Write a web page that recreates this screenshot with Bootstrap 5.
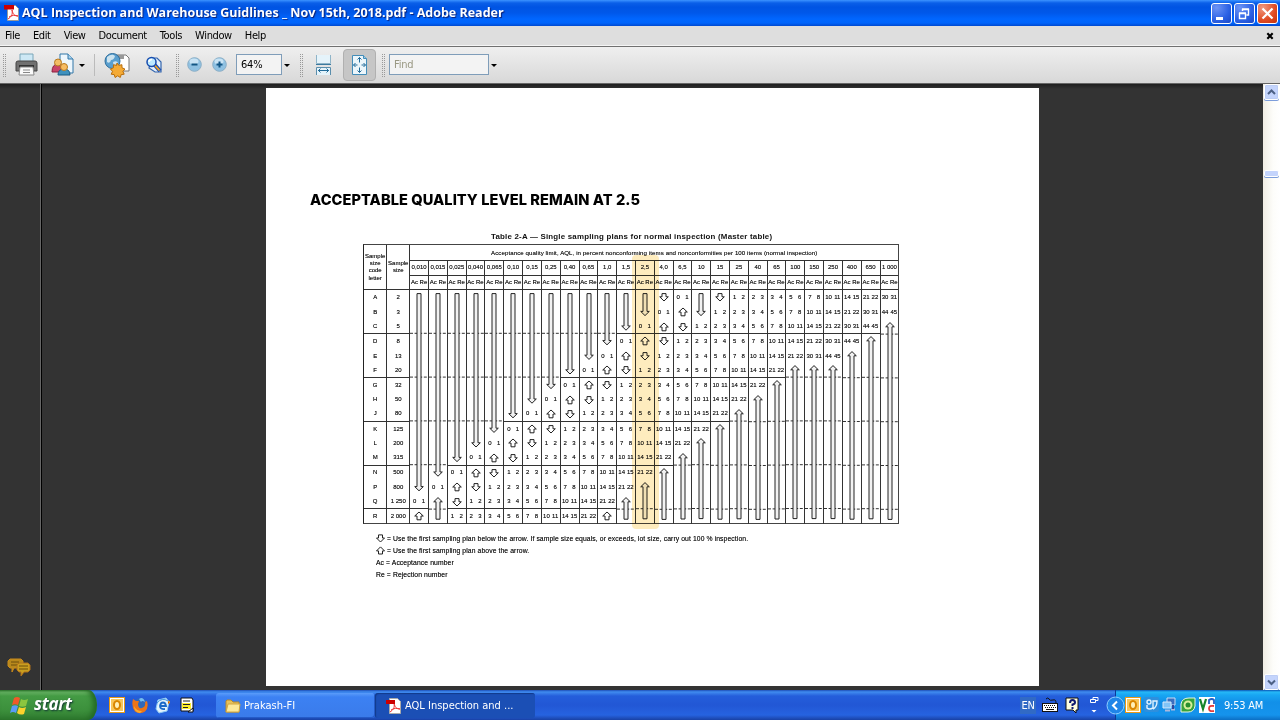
<!DOCTYPE html>
<html lang="en">
<head>
<meta charset="utf-8">
<title>AQL Inspection and Warehouse Guidlines - Adobe Reader</title>
<link href="https://cdn.jsdelivr.net/npm/bootstrap@5.3.0/dist/css/bootstrap.min.css" rel="stylesheet">
<style>
html,body{height:100%;overflow:hidden}
body{font-family:"DejaVu Sans Condensed","DejaVu Sans",sans-serif;font-stretch:condensed;font-size:11px;line-height:1;color:#000;background:#333;letter-spacing:-.22px}
svg{display:block;flex:none}
.app{width:1280px;height:720px}
/* title bar */
.titlebar{height:26px;padding:0 2px 0 4px;background:linear-gradient(#3d95ff 0,#2a80f8 1px,#0a5fe8 3px,#0054e3 7px,#0058ea 13px,#0066ff 19px,#0064fb 23px,#0049d0 26px)}
.titletext{font-family:"Open Sans",sans-serif;font-stretch:normal;font-weight:700;font-size:12.5px;color:#fff;text-shadow:1px 1px 1px #0a1f73;letter-spacing:0;white-space:nowrap;margin-left:2px}
.winbtns{gap:2px}
.winbtn{width:21px;height:21px;border:1px solid #fff;border-radius:3px;background:radial-gradient(circle at 25% 20%,#6d94f5,#2b61e4 60%,#1c47c5)}
.winclose{background:radial-gradient(circle at 25% 20%,#f09a80,#e04b22 60%,#c2320c)}
/* menu */
.menubar{height:20px;background:#dedede;padding:0 6px 0 5px;border-bottom:1px solid #f5f5f5}
.menubar .nav{gap:13px}
.menubar .nav-link{padding:0;color:#000;white-space:nowrap;letter-spacing:-.38px}
.toolstrip{height:38px;border-top:1px solid #707070;border-bottom:1px solid #666;background:linear-gradient(#efefef,#d8d8d8)}
.toolstrip>*{flex:none}
.grip{width:3px;height:23px;background:conic-gradient(#999 25%,transparent 0) -1px 0/2px 2px}
.m2{margin-left:2px}.m3{margin-left:3px}.m4{margin-left:4px}.m6{margin-left:6px}.m8{margin-left:8px}.m9{margin-left:9px}.m10{margin-left:10px}.m12{margin-left:12px}.m13{margin-left:13px}.m16{margin-left:16px}.m21{margin-left:21px}
.caret{width:0;height:0;border:3px solid transparent;border-top-color:#000;border-bottom:0}
.vsep{width:1px;height:22px;background:#bbb}
.field{height:21px;border:1px solid #7f9db9;background:#f3f3f3;padding:0 4px;line-height:20px;margin-bottom:1px}
.zoomfield{width:46px}.findfield{width:100px;color:#9a9883}
.pressed{width:33px;height:32px;border:1px solid #b0b0b0;border-radius:4px;background:#c6c6c6;padding-left:7px}
/* document area */
.workspace{height:606px;background:linear-gradient(#1f1f1f,#333 5px)}
.sidepane{width:42px;border-right:1px solid #000;box-shadow:inset -1px 0 #666;padding:0 0 12px 7px}
.canvas{padding:4px 224px 4px 224px}
.sheet{width:773px;height:598px;background:#fff;color:#111;font-family:"Liberation Sans",sans-serif;font-stretch:normal}
.heading{font-family:Inter,sans-serif;font-weight:800;font-size:14.6px;line-height:18px;margin:0;padding:103px 0 0 44px;white-space:nowrap;color:#000;letter-spacing:.06px}
.caption-line{font-weight:700;font-size:7.9px;line-height:10px;padding:23px 0 0 225px;white-space:nowrap;letter-spacing:.21px}
.plan{margin:2.4px 0 0 97px;width:536.2px;height:279.3px;display:grid;position:relative;
 grid-template-columns:22.4px 22.8px repeat(26,18.82px);
 grid-template-rows:15.8px 14.5px 14.8px repeat(16,14.6px);border:1px solid #444;border-left-color:#222;
 font-size:6px;line-height:7.2px;text-shadow:0 0 .6px #555;color:#222;letter-spacing:0}
.plan>div{border-left:.8px solid #333;white-space:nowrap}
.plan>div.edge{border-left:0}
.plan .ruled{border-bottom:1px solid #333}
.plan .wide{font-size:6.1px;letter-spacing:.09px}
.pair span{width:8.7px;text-align:center}
.aql-mark{position:absolute;left:268px;top:10px;width:27px;height:274px;border-radius:4px;background:#feecbe;mix-blend-mode:multiply}
.plan>.aql-mark{border:0}
.legend{font-size:6.8px;line-height:12.1px;margin:9.5px 0 0 110px;text-shadow:0 0 .6px #555;color:#222;letter-spacing:.09px}
.legend div{white-space:nowrap;height:12.1px}
.legend svg{margin-left:-1px;margin-right:1px}
/* scroll bar */
.scroller{width:17px;background:linear-gradient(90deg,#f0ede4,#fdfdfa 60%,#fff);padding:0 1px}
.sbtn{width:15px;height:16px;border-radius:2px;border:1px solid #fff;box-shadow:0 1px #7c9ddb,inset 0 0 0 1px #bccdf5;background:#c4d4fc}
.thumb{width:15px;height:7px;margin-top:70px;border-radius:2px;border:1px solid #fff;box-shadow:0 1px #7c9ddb;background:#c4d4fc}
/* task bar */
.taskbar{height:30px;color:#fff;background:linear-gradient(#1f4fb8 0,#3f8cf0 2px,#3a80ea 3px,#245edb 6px,#2257d5 15px,#2663e0 25px,#1941a5 30px)}
.taskbar>*{flex:none}
.startbtn{width:97px;height:30px;border-radius:0 9px 9px 0/0 15px 15px 0;padding-left:10px;gap:5px;background:linear-gradient(#2f7a30 0,#6cb868 2px,#449b44 6px,#3c903c 20px,#2f7a2f 30px);box-shadow:inset -4px 0 5px #246b25}
.startword{font-family:"Open Sans",sans-serif;font-stretch:normal;font-weight:700;font-style:italic;font-size:17px;line-height:26px;letter-spacing:-.3px;padding-bottom:2px;text-shadow:1px 1px 2px #133}
.taskbtn{width:159px;height:25px;margin-top:1px;border-radius:3px;padding-left:9px;gap:3px;background:linear-gradient(#5a9cfa,#3c81f3 4px,#3a7bea);box-shadow:inset -1px -1px #245bc8;letter-spacing:0}
.taskbtn.current{width:160px;padding-left:11px;gap:4px;background:#1b4fb5;box-shadow:inset 1px 1px 1px #123a8a}
.lang{width:16px;height:17px;background:#316ac5;line-height:18px;text-align:center}
.tray{width:165px;height:30px;border-left:1px solid #0c3a96;background:linear-gradient(#0b56b8 0,#26b8f7 2px,#18a6f3 5px,#1290e8 12px,#1593ec 25px,#0c6fc4 30px)}
.chev{margin-left:-10px}
</style>
</head>
<body>
<div class="app d-flex flex-column">
 <header class="titlebar d-flex align-items-center">
  <svg width="16" height="18" viewBox="0 0 16 18"><path d="M3.500 1.500h8l3 3v12h-11z" fill="#fff" stroke="#999"/><path d="M8 6c1 4 2 6 6 6M4 15c3-2 5-4 4-9M5 13c3-2 6-2 9-1" stroke="#e33" fill="none"/><rect y="1" width="10" height="4.500" fill="#c00"/></svg>
  <span class="titletext">AQL Inspection and Warehouse Guidlines _ Nov 15th, 2018.pdf - Adobe Reader</span>
  <div class="winbtns ms-auto d-flex">
   <div class="winbtn"><svg width="19" height="19"><path d="M4 14.500h7" stroke="#fff" stroke-width="3"/></svg></div>
   <div class="winbtn"><svg width="19" height="19" fill="none" stroke="#fff"><path d="M4.500 9.500h6v5h-6zM4 9h7M7.500 7V5.500h6v5.500h-2M7 5h7" stroke-width="1.400"/></svg></div>
   <div class="winbtn winclose"><svg width="19" height="19"><path d="M4.500 4.500l10 10m0-10l-10 10" stroke="#fff" stroke-width="2.200"/></svg></div>
  </div>
 </header>
 <nav class="menubar d-flex align-items-center">
  <div class="nav d-flex flex-nowrap">
   <a class="nav-link">File</a><a class="nav-link">Edit</a><a class="nav-link">View</a><a class="nav-link">Document</a><a class="nav-link">Tools</a><a class="nav-link">Window</a><a class="nav-link">Help</a>
  </div>
  <svg class="ms-auto" width="8" height="8" viewBox="0 0 9 9"><path d="M1.500 1.500l6 6m0-6l-6 6" stroke="#000" stroke-width="2.400"/></svg>
 </nav>
 <div class="toolstrip d-flex align-items-center">
  <i class="grip m3"></i>
  <svg class="m9" width="24" height="24" viewBox="0 0 24 24"><path d="M5 1h13v8H5z" fill="#cde8f5" stroke="#7ba6b8"/><path d="M1 10q0-2 2-2h17q2 0 2 2v8H1z" fill="#707070" stroke="#444"/><path d="M4 12h15v3H4z" fill="#333"/><path d="M5 14h13l1 8H4z" fill="#fafafa" stroke="#888"/><path d="M8 17h7M8 19.500h7" stroke="#888"/></svg>
  <svg class="m12" width="24" height="24" viewBox="0 0 24 24"><path d="M9 1h8l5 5v14H9z" fill="#edf6fc" stroke="#3177a8"/><path d="M17 1v5h5" fill="#a8d0eb" stroke="#3177a8"/><path d="M1 19q0-8 6-8t6 8z" fill="#c84468" stroke="#8c2040"/><circle cx="7" cy="9.500" r="3.500" fill="#f3bd65" stroke="#b67920"/><path d="M7 22q0-6 6-6t6 6z" fill="#3f91bd" stroke="#185b83"/><circle cx="13" cy="14" r="3.500" fill="#f7bd62" stroke="#b67920"/></svg>
  <i class="caret m4"></i><i class="vsep m9"></i>
  <svg class="m9" width="28" height="26" viewBox="0 0 28 26"><path d="M11 3h11l3 3v13H11z" fill="#fff" stroke="#777"/><path d="M11 3h9v4h-9z" fill="#999"/><circle cx="8.500" cy="9" r="7.500" fill="#5a9fce" stroke="#2c6d9c"/><path d="M3 5q5-4 8-1-1 4-4 4-1 4-4 2zM9 10q4-2 5 1l-4 4z" fill="#cde3ee"/><path d="M13 11l1.900 2.400 3-.7.100 3.100 2.900 1.200-2 2.400 1.300 2.800-3 .4-.9 2.900-2.600-1.700-2.600 1.700-.9-2.900-3-.4 1.300-2.800-2-2.400 2.900-1.200.100-3.100 3 .7z" fill="#f4aa35" stroke="#b86d0a"/></svg>
  <svg class="m13" width="18" height="20" viewBox="0 0 18 20"><path d="M7 3h5l4 4v10h-6L4 13z" fill="#e4f0fb" stroke="#3465ad" stroke-width="1.200"/><path d="M9 9l6 7" stroke="#1b4eb0" stroke-width="4"/><path d="M9.500 10l5 5.500" stroke="#f6a51c" stroke-width="1.800"/><circle cx="6.500" cy="7" r="4.500" fill="#bdeaff" stroke="#174cae" stroke-width="1.500"/><path d="M4 7q0-2.500 3-2.500" fill="none" stroke="#fff" stroke-width="1.500"/></svg>
  <i class="grip m13"></i>
  <svg class="m8" width="16" height="16" viewBox="0 0 16 16"><circle cx="7.500" cy="7.500" r="6.800" fill="#8fc1e2" stroke="#8aaec6"/><ellipse cx="7" cy="4.500" rx="4.500" ry="3" fill="#c8e3f4"/><path d="M4.500 7.500h6" stroke="#125685" stroke-width="2"/></svg>
  <svg class="m9" width="16" height="16" viewBox="0 0 16 16"><circle cx="7.500" cy="7.500" r="6.800" fill="#8fc1e2" stroke="#8aaec6"/><ellipse cx="7" cy="4.500" rx="4.500" ry="3" fill="#c8e3f4"/><path d="M4.500 7.500h6M7.500 4.500v6" stroke="#125685" stroke-width="2"/></svg>
  <div class="field zoomfield m8">64%</div><i class="caret m2"></i><i class="grip m10"></i>
  <svg class="m12" width="18" height="20" viewBox="0 0 18 20"><path d="M1.500 0v8.500h14V0" fill="#e5f3fa" stroke="#8fb4c8"/><path d="M1 9.500h15" stroke="#3b799e"/><path d="M1.500 20v-7.500h14V20" fill="#e5f3fa" stroke="#5a8eac"/><path d="M3 15.500h11M5.500 13.500l-2 2 2 2M11.500 13.500l2 2-2 2" fill="none" stroke="#216b99"/></svg>
  <div class="pressed m10 d-flex align-items-center"><svg width="18" height="21" viewBox="0 0 18 21"><path d="M1.500.5h11l3 3v16h-14z" fill="#ecf6fb" stroke="#438db9"/><path d="M12.500.5v3h3" fill="#9ccbe3" stroke="#438db9"/><path d="M8.500 2.500v5M6.500 4.500l2-2 2 2M8.500 12.500v5M6.500 15.500l2 2 2-2M2.500 10h4M4.500 8l-2 2 2 2M10.500 10h4M12.500 8l2 2-2 2" fill="none" stroke="#216b99"/></svg></div>
  <i class="grip m6"></i><div class="field findfield m4">Find</div><i class="caret m2"></i>
 </div>
 <main class="workspace d-flex">
  <aside class="sidepane d-flex align-items-end"><svg width="25" height="20" viewBox="0 0 25 20"><path d="M3 1h11l2 2v5l-2 2H7l-2 4V10H3L1 8V3z" fill="#b8891c" stroke="#c98a1a"/><path d="M4 4h8M4 7h6" stroke="#6d4e0c"/><path d="M12 5h9l2 2v5l-2 2h-4l-3 4v-4h-2l-2-2V7z" fill="#c99e1f" stroke="#b0701a"/><path d="M12 8h9M12 11h9" stroke="#6d4e0c"/></svg></aside>
  <section class="canvas flex-grow-1">
   <article class="sheet">
    <h1 class="heading">ACCEPTABLE QUALITY LEVEL REMAIN AT 2.5</h1>
    <div class="caption-line">Table 2-A — Single sampling plans for normal inspection (Master table)</div>
    <div class="plan" id="plan"></div>
    <div class="legend">
     <div class="d-flex"><svg width="11" height="11" viewBox="-5.500 -1.500 11 11"><path d="M-2 .4H2V3.500H4L0 7.500L-4 3.500H-2Z" fill="#fff" stroke="#222"/></svg><span>= Use the first sampling plan below the arrow. If sample size equals, or exceeds, lot size, carry out 100 % inspection.</span></div>
     <div class="d-flex"><svg width="11" height="11" viewBox="-5.500 -1.500 11 11"><path d="M0 .4L4 4.400H2V7.500H-2V4.400H-4Z" fill="#fff" stroke="#222"/></svg><span>= Use the first sampling plan above the arrow.</span></div>
     <div>Ac = Acceptance number</div>
     <div>Re = Rejection number</div>
    </div>
   </article>
  </section>
  <div class="scroller d-flex flex-column">
   <div class="sbtn"><svg width="13" height="14"><path d="M3 9l3.500-3.500L10 9" fill="none" stroke="#4d6185" stroke-width="2"/></svg></div>
   <div class="thumb"></div>
   <div class="sbtn mt-auto"><svg width="13" height="14"><path d="M3 5.500L6.500 9 10 5.500" fill="none" stroke="#4d6185" stroke-width="2"/></svg></div>
  </div>
 </main>
 <footer class="taskbar d-flex align-items-center">
  <div class="startbtn d-flex align-items-center"><svg width="19" height="19" viewBox="0 0 19 19"><path d="M4 2q3-2 6 0L8 9Q5 7.500 2 9z" fill="#f0592a"/><path d="M11 3q3 2 7 0l-2 7q-4 1.500-7 0z" fill="#8cc63f"/><path d="M2 10q3-1.500 6 0l-2 7q-3-2-6 0z" fill="#5a9cf8"/><path d="M9 11q3 2 7 0l-2 7q-4 1.500-7-1z" fill="#fbd22c"/></svg><span class="startword">start</span></div>
  <svg class="m12" width="17" height="17" viewBox="0 0 17 17"><rect x=".5" y=".5" width="15" height="15" fill="#fff" stroke="#e89a16"/><rect x="2" y="2" width="12" height="12" fill="#f8c65a"/><ellipse cx="8" cy="8" rx="3" ry="4" fill="#fff0b8" stroke="#d98600" stroke-width="2"/></svg>
  <svg class="m6" width="17" height="17" viewBox="0 0 17 17"><circle cx="8.500" cy="8" r="7" fill="#2f68bb"/><path d="M7 2q4-3 6 3-3-2-4 0z" fill="#74bdf0"/><path d="M1 2l3 2h3l-1 3q0 5 4 4 4-1 3-6l2-1q2 7-2 10.500-5 3.500-10 0Q-1 10 1 2z" fill="#ec7418"/><path d="M2 9q2 5 8 5l-2 2Q2 15 2 9z" fill="#f9ac30"/></svg>
  <svg class="m6" width="17" height="17" viewBox="0 0 17 17"><path d="M3 3l8-2 3 4-2 9-8 2-3-4z" fill="#e2f2fc" stroke="#8cc8f4"/><path d="M5 9h6Q10.500 5.500 8 5.500T5 9q0 3.500 5 3" fill="none" stroke="#1a69c8" stroke-width="1.800"/><path d="M2 6q5-6 11-2" fill="none" stroke="#4197df"/><path d="M13 4l2 1-2 2" stroke="#e0a21c" fill="#d5401a"/></svg>
  <svg class="m8" width="15" height="17" viewBox="0 0 15 17"><path d="M1 1h11l1 2v11H1z" fill="#fff" stroke="#111"/><path d="M2 6h9v6H2z" fill="#ffef28"/><path d="M3 4h7M3 7.500h7M3 10.500h5" stroke="#222" stroke-width="1.200"/><path d="M8 15l5-4v4z" fill="#fff" stroke="#111"/></svg>
  <div class="taskbtn m21 d-flex align-items-center"><svg width="16" height="14" viewBox="0 0 16 14"><path d="M1 13V2l1-1h4l2 2h6v10z" fill="#e6c15a" stroke="#b5892c"/><path d="M1 13l2-8h12l-1 8z" fill="#fce99a" stroke="#d0a640"/></svg><span>Prakash-FI</span></div>
  <div class="taskbtn current d-flex align-items-center"><svg width="15" height="16" viewBox="0 0 15 16"><path d="M3.500.5h8l3 3v12h-11z" fill="#fff" stroke="#aaa"/><path d="M8 5c1 4 2 6 6 6M4 14c3-2 5-4 4-9M5 12c3-2 6-2 9-1" stroke="#e33" fill="none"/><rect y="2" width="9" height="4" fill="#c00"/></svg><span>AQL Inspection and ...</span></div>
  <div class="lang ms-auto">EN</div>
  <svg class="m6" width="17" height="16" viewBox="0 0 17 16"><path d="M4 2q2-2 3 0t4 1 3 3" fill="none" stroke="#111"/><rect x=".5" y="6.500" width="15" height="8" fill="#fff" stroke="#111"/><path d="M2 8.500h12M3 10.500h11" stroke="#111" stroke-dasharray="1 1"/><path d="M4 12.500h8" stroke="#111"/></svg>
  <svg class="m6" width="15" height="17" viewBox="0 0 15 17"><path d="M1 1h12v12h-2v3l-3-3H1z" fill="#fffee0" stroke="#111"/><path d="M5 6q0-3 2.500-3T10 5.500Q10 7 7.500 7.500V9M7.500 10v2" fill="none" stroke="#111b70" stroke-width="2"/></svg>
  <svg class="m10" width="9" height="18" viewBox="0 0 9 18"><path d="M3 3V1.500h5v3H6M.5 3.500h5v3h-5z" fill="none" stroke="#fff"/><path d="M1.500 14h5L4 16.500z" fill="#fff"/></svg>
  <div class="tray m16 d-flex align-items-center">
   <svg class="chev" width="19" height="19" viewBox="0 0 19 19"><circle cx="9.500" cy="9.500" r="8.500" fill="#1f85e8" stroke="#8fd0ff"/><path d="M11 5.500l-4 4 4 4" fill="none" stroke="#fff" stroke-width="2"/></svg>
   <svg width="16" height="16" viewBox="0 0 16 16"><rect x=".5" y=".5" width="15" height="15" fill="#fff" stroke="#e89a16"/><rect x="2" y="2" width="12" height="12" fill="#f8c65a"/><ellipse cx="8" cy="8" rx="3" ry="4" fill="#fff0b8" stroke="#d98600" stroke-width="2"/></svg>
   <svg class="m3" width="16" height="16" viewBox="0 0 16 16"><rect width="15" height="15" rx="2" fill="#2e8fdd"/><circle cx="5" cy="5" r="2" fill="none" stroke="#def1ff" stroke-width="1.400"/><path d="M3 8v3q2 2 6 0V4h4q0 6-4 8" fill="none" stroke="#def1ff" stroke-width="1.400"/></svg>
   <svg class="m2" width="16" height="16" viewBox="0 0 16 16"><path d="M5 1h8v7H5z" fill="#3a6fc0" stroke="#c9dcf5"/><path d="M1 5h8v6H1z" fill="#81c4f7" stroke="#d7e9fb"/><path d="M3 13.500h5M9 12.500h4" stroke="#aab8dd" stroke-width="2"/><path d="M11 8v4" stroke="#33479b" stroke-width="2"/></svg>
   <svg class="m2" width="17" height="17" viewBox="0 0 17 17"><path d="M1 15V7q1-6 8-6h6v8q-1 6-7 6z" fill="#38a33c" stroke="#e7f7df"/><circle cx="8" cy="8" r="4.500" fill="#d9ef9b"/><circle cx="8" cy="8" r="2.500" fill="#288f2d"/></svg>
   <svg class="m2" width="16" height="16" viewBox="0 0 16 16"><path d="M0 0h16v16H0z" fill="#fff"/><path d="M1 2l3 10 3-10" fill="none" stroke="#16862c" stroke-width="2.200"/><path d="M10 7V3q3-2 5 0v4" fill="none" stroke="#245fc4" stroke-width="1.800"/><path d="M15 9q-5-1-5 2.500t5 2.500" fill="none" stroke="#e23b3b" stroke-width="1.800"/></svg>
   <span class="m9">9:53 AM</span>
  </div>
 </footer>
</div>
<script>
// Sampling plan: each AQL column repeats the same sequence, shifted by one row.
const aql=['0,010','0,015','0,025','0,040','0,065','0,10','0,15','0,25','0,40','0,65','1,0','1,5','2,5','4,0','6,5','10','15','25','40','65','100','150','250','400','650','1 000'];
const letters='ABCDEFGHJKLMNPQR';
const sizes=['2','3','5','8','13','20','32','50','80','125','200','315','500','800','1 250','2 000'];
const seq=['0 1','up','down','1 2','2 3','3 4','5 6','7 8','10 11','14 15','21 22','30 31','44 45'];
const W=18.82,H=14.6,ruled=[2,5,8,11,14];
const plan=document.getElementById('plan');
let out='';
function cell(row,col,span,cspan,cls,html){
 out+=`<div class="${cls}" style="grid-area:${row}/${col}/span ${span}/span ${cspan}">${html}</div>`;
}
function arrow(dir,r,n){
 const m=W/2-.4,h=n*H;let s='';
 for(const k of ruled) if(k>=r&&k<r+n-1){const y=(k-r+1)*H-.5;s+=`<path d="M0 ${y}H${W}" stroke="#333" stroke-dasharray="3 1.600"/>`;}
 const a=3.6,b=h-H+11,c=n>1&&dir=='up'?h-5:h-3.8,w=2;
 const d=dir=='down'?`M${m-w} ${a}H${m+w}V${b-4.2}H${m+4.3}L${m} ${b}L${m-4.3} ${b-4.2}H${m-w}Z`
  :`M${m} ${n>1?2.6:3}L${m+4.3} ${n>1?6.8:7}H${m+w}V${c}H${m-w}V${n>1?6.8:7}H${m-4.3}Z`;
 return `<svg width="${W-.8}" height="${h}">${s}<path d="${d}" fill="${n>1?'#f2f2f2':'#fff'}" stroke="#222"/></svg>`;
}
const mid='d-flex align-items-center justify-content-center text-center ';
cell(1,1,3,1,mid+'edge ruled','Sample<br>size<br>code<br>letter');
cell(1,2,3,1,mid+'ruled','Sample<br>size');
cell(1,3,1,26,mid+'ruled wide','Acceptance quality limit, AQL, in percent nonconforming items and nonconformities per 100 items (normal inspection)');
aql.forEach((t,c)=>{cell(2,c+3,1,1,mid+'ruled',t);cell(3,c+3,1,1,mid+'ruled','Ac Re');});
for(let r=0;r<16;r++){
 const u=ruled.includes(r)?'ruled':'';
 cell(r+4,1,1,1,mid+'edge '+u,letters[r]);
 cell(r+4,2,1,1,mid+u,sizes[r]);
}
aql.forEach((t,c)=>{
 const zero=14-c;
 const rows=[];
 for(let r=0;r<16;r++){
  const k=r-zero;
  let v=k<0?'down':k<=10?seq[k]:(k<=12&&r<=4?seq[k]:'up');
  if(c==15&&r==0)v='down';
  if(c==1&&r==15)v='up';
  rows.push(v);
 }
 for(let r=0;r<16;){
  let n=1;
  if(rows[r]=='up'||rows[r]=='down'){
   while(r+n<16&&rows[r+n]==rows[r])n++;
   cell(r+4,c+3,n,1,ruled.includes(r+n-1)?'ruled':'',arrow(rows[r],r,n));
  }else{
   const p=rows[r].split(' ');
   cell(r+4,c+3,1,1,mid+'pair '+(ruled.includes(r)?'ruled':''),`<span>${p[0]}</span><span>${p[1]}</span>`);
  }
  r+=n;
 }
});
plan.innerHTML=out+'<div class="aql-mark"></div>';
</script>
<script src="https://cdn.jsdelivr.net/npm/bootstrap@5.3.0/dist/js/bootstrap.bundle.min.js"></script>
</body>
</html>
